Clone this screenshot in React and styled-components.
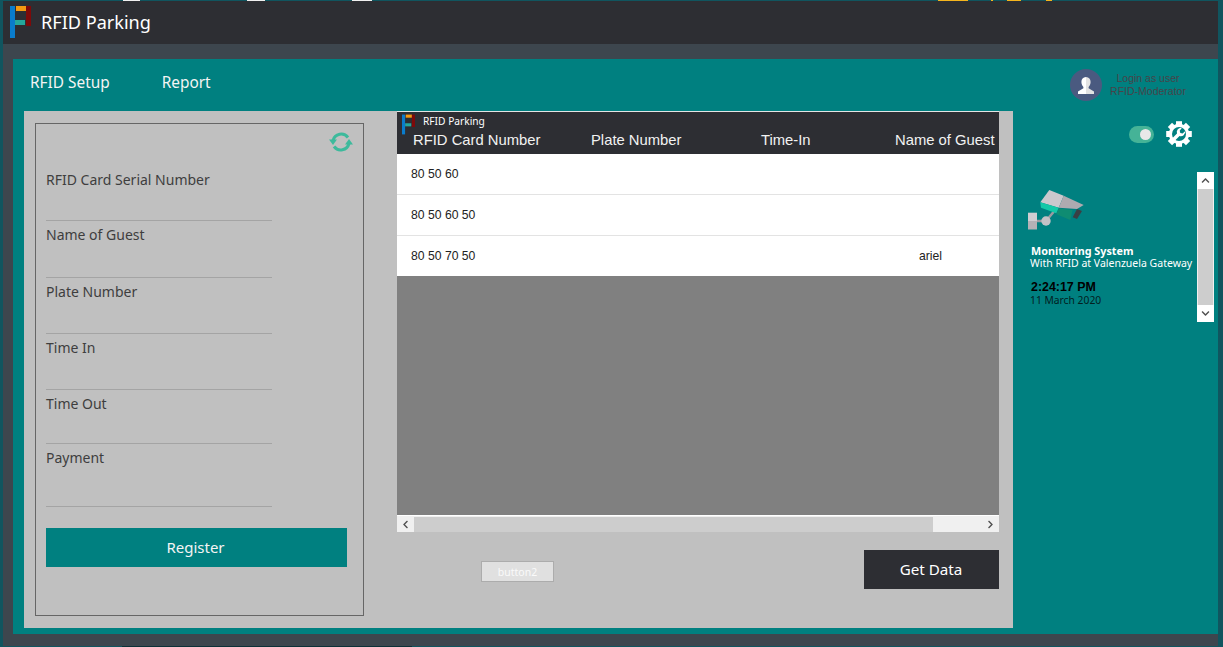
import React from "react";
import styled, { createGlobalStyle } from "styled-components";
import { FaChevronLeft, FaChevronRight, FaChevronUp, FaChevronDown } from "react-icons/fa";

const Global = createGlobalStyle`
  html, body { margin: 0; padding: 0; width: 1223px; height: 647px; overflow: hidden; background: #10555f; }
  * { box-sizing: border-box; }
`;
const ui = `"Noto Sans", "Open Sans", sans-serif`;
const arial = `"Liberation Sans", Arial, sans-serif`;

const Page = styled.div`
  width: 1223px; height: 647px; padding: 0 5px 0 3px;
  display: flex; flex-direction: column;
`;
const Sliver = styled.div`
  height: 1px; flex: none; display: flex; margin-left: -3px;
`;
const Bit = styled.span`
  height: 1px; flex: none; width: ${p => p.$w}px; margin-left: ${p => p.$ml}px; background: ${p => p.$c};
`;
const TitleBar = styled.header`
  height: 43px; background: #2d2e33; flex: none;
  display: flex; align-items: center; gap: 10px; padding: 0 0 2px 7px;
  color: #fff; font: 18.1px ${ui};
`;
const Frame = styled.div`
  flex: 1; background: #3d464e; padding: 15px 0 12px 10px; display: flex; min-height: 0;
`;
const Teal = styled.div`
  flex: 1; background: #008080; display: flex; flex-direction: column; min-width: 0;
`;
const TopRow = styled.div`
  height: 52px; flex: none; display: flex; align-items: center;
`;
const NavItem = styled.span`
  color: #f4f4f4; font: 15.4px ${ui}; margin: 0 0 6px ${p => p.$ml}px;
`;
const User = styled.div`
  margin-left: auto; margin-right: 32px; display: flex; align-items: center; gap: 8px;
`;
const UserText = styled.div`
  color: #474449; font: 10.5px/13.5px ${arial}; text-align: center; width: 76px; white-space: nowrap;
`;
const Body = styled.div`
  flex: 1; display: flex; min-height: 0; padding-left: 11px; padding-bottom: 6px;
`;
const Panel = styled.main`
  width: 989px; background: #c0c0c0; display: flex; padding: 0 14px 0 11px; gap: 33px;
`;
const FormBox = styled.section`
  width: 329px; height: 493px; margin-top: 12px; border: 1px solid #666; padding: 0 16px 0 10px;
  display: flex; flex-direction: column;
`;
const FormHead = styled.div`
  height: 41px; display: flex; justify-content: flex-end; align-items: flex-start; padding-top: 7px; margin-right: -6px; flex: none;
`;
const Field = styled.div`
  height: ${p => p.$h}px; width: 226px; border-bottom: 1px solid #a4a4a4; flex: none;
  color: #3e3e3e; font: 14px/20px ${ui};
  padding-top: ${p => p.$t}px;
`;
const Register = styled.button`
  width: 301px; height: 39px; margin-top: 21px; border: 0; background: #008080; color: #f4f4f4;
  font: 15px ${ui}; flex: none; padding: 0 2px 2px 0;
`;
const Right = styled.section`
  width: 602px; display: flex; flex-direction: column;
`;
const Table = styled.div`
  height: 421px; background: #808080; display: flex; flex-direction: column; overflow: hidden;
  border-top: 1px solid #e4e4e4;
`;
const TableHead = styled.div`
  height: 42px; background: #2d2e33; color: #f2f2f2; flex: none; padding: 2px 0 0 5px; overflow: hidden;
`;
const MiniTitle = styled.div`
  display: flex; gap: 8px; font: 10.2px/14px ${ui}; height: 16px; color: #fff;
`;
const Columns = styled.div`
  display: grid; grid-template-columns: 178px 170px 134px 140px; padding-left: 11px;
  font: 14.8px/20px ${arial}; white-space: nowrap;
`;
const Row = styled.div`
  height: 41px; background: #fff; border-bottom: 1px solid #e3e3e3; flex: none;
  display: grid; grid-template-columns: 508px 94px; padding-left: 14px; align-items: center;
  font: 12.2px ${arial}; color: #222;
`;
const LastRow = styled(Row)`height: 40px; border-bottom: 0;`;
const Empty = styled.div`flex: 1;`;
const HScroll = styled.div`
  height: 17px; background: #f0f0f0; display: flex; align-items: center; flex: none;
  border-top: 1px solid #fff;
`;
const ArrowBtn = styled.span`
  width: 17px; height: 16px; display: flex; align-items: center; justify-content: center;
  color: #505050; font-size: 9px; flex: none;
`;
const HThumb = styled.span`
  width: 519px; height: 15px; background: #cdcdcd; flex: none;
`;
const Spacer = styled.span`flex: 1;`;
const Actions = styled.div`
  flex: 1; display: flex; padding-left: 84px; padding-top: 18px; justify-content: space-between; align-items: flex-start;
`;
const SmallBtn = styled.button`
  width: 73px; height: 21px; margin-top: 11px; border: 1px solid #acacac; background: #e0e0e0; color: #fafafa;
  font: 10.5px ${ui}; padding: 0;
`;
const GetData = styled.button`
  width: 135px; height: 39px; border: 0; background: #2d2e33; color: #fff; font: 15.2px ${ui}; padding: 0 1px 2px 0;
`;
const Side = styled.aside`
  flex: 1; min-width: 0; display: flex; flex-direction: column; align-items: flex-end; padding-right: 4px;
`;
const SideTools = styled.div`
  height: 51px; display: flex; gap: 12px; padding-right: 22px; align-items: flex-start; flex: none; margin-top: 10px;
`;
const Toggle = styled.span`
  width: 25px; height: 17px; border-radius: 9px; background: #45b397; display: flex; align-items: center; justify-content: flex-end; padding-right: 3px; margin-top: 5px;
`;
const Knob = styled.span`
  width: 11px; height: 11px; border-radius: 50%; background: #e8e8e8;
`;
const ScrollArea = styled.div`
  width: 100%; height: 150px; display: flex; justify-content: space-between;
`;
const Info = styled.div`
  padding: 18px 0 0 15px; color: #fff; min-width: 0;
`;
const InfoTitle = styled.div`
  font: bold 10.8px/13px ${ui}; margin: 14px 0 0 3px; white-space: nowrap;
`;
const InfoSub = styled.div`
  font: 10.5px/13px ${ui}; margin-left: 2px; white-space: nowrap;
`;
const Clock = styled.div`
  font: bold 12.4px/13px ${arial}; color: #000; margin: 11px 0 0 3px;
`;
const DateText = styled.div`
  font: 10.3px/13px ${ui}; color: #02201f; margin-left: 2px;
`;
const VScroll = styled.div`
  width: 17px; height: 150px; background: #f0f0f0; display: flex; flex-direction: column; align-items: center; flex: none;
`;
const VThumb = styled.span`
  width: 15px; flex: 1; background: #cdcdcd;
`;
const VBtn = styled.span`
  height: 17px; width: 17px; display: flex; align-items: center; justify-content: center; color: #505050; font-size: 9px; flex: none; background: #fff;
`;
const LogoWrap = styled.span`
  display: block; flex: none;
`;

const Logo = ({ w, h }) => (
  <LogoWrap>
    <svg width={w} height={h} viewBox="0 0 21 32" style={{ display: "block" }}>
      <rect x="0" y="0" width="5" height="32" fill="#0a7ccc" />
      <rect x="6" y="0" width="10" height="5" fill="#f49a12" />
      <rect x="5" y="14" width="10" height="5" fill="#25a79c" />
      <rect x="16" y="0" width="5" height="20" fill="#7d0a0a" />
    </svg>
  </LogoWrap>
);
const Refresh = () => (
  <svg width="24" height="22" viewBox="0 0 24 22" style={{ display: "block" }}>
    <path d="M19 6.500A8.500 8.500 0 0 0 4 9.500" fill="none" stroke="#3dba9c" strokeWidth="3" />
    <path d="M5 15.500A8.500 8.500 0 0 0 20 12.500" fill="none" stroke="#3dba9c" strokeWidth="3" />
    <path d="M0 8.500h8L4 14z" fill="#3dba9c" />
    <path d="M16 13.500h8L20 8z" fill="#3dba9c" />
  </svg>
);
const Avatar = () => (
  <svg width="32" height="32" viewBox="0 0 32 32" style={{ flex: "none" }}>
    <circle cx="16" cy="16" r="16" fill="#4a5a80" />
    <path d="M16 8c-3 0-4.600 2.200-4.600 5 0 2.200 1 4 2 5v1.300L8 22.500V25h8z" fill="#fff" />
    <path d="M16 8c3 0 4.600 2.200 4.600 5 0 2.200-1 4-2 5v1.300l5.400 3.200V25h-8z" fill="#e3e3e3" />
  </svg>
);
const Gear = () => {
  const teeth = [0, 45, 90, 135, 180, 225, 270, 315];
  return (
    <svg width="26" height="26" viewBox="0 0 26 26" style={{ flex: "none" }}>
      {teeth.map(a => (
        <rect key={a} x="10" y="0.200" width="6" height="6" fill="#fff" transform={`rotate(${a} 13 13)`} />
      ))}
      <circle cx="13" cy="13" r="10.200" fill="#fff" />
      <circle cx="13" cy="13" r="7" fill="#008080" />
      <path d="M15.800 6.900a4.300 4.300 0 0 0-4.800 5.600l-4.700 4.700 2.500 2.500 4.700-4.700a4.300 4.300 0 0 0 5.600-4.800l-2.500 2.400-2.300-.6-.6-2.300z" fill="#fff" />
    </svg>
  );
};
const Camera = () => (
  <svg width="58" height="40" viewBox="0 0 58 40" style={{ display: "block" }}>
    <path d="M18 31L25.700 21.700" stroke="#9a9aa0" strokeWidth="2.500" />
    <path d="M9 31H18" stroke="#9a9aa0" strokeWidth="2.500" />
    <rect x="0" y="22.700" width="9" height="8.300" fill="#d0cdd2" />
    <rect x="0" y="31" width="9" height="8.500" fill="#b4b1b6" />
    <circle cx="18" cy="31" r="4.700" fill="#c4c1c6" />
    <path d="M21.300 0L12.300 12.300 30.700 17.700 35.700 5.700z" fill="#cbc8cd" />
    <path d="M35.700 5.700L55.700 15 49 19 30.700 17.700z" fill="#aeaab0" />
    <path d="M12.300 12.300L30.700 17.700 28.300 23.300 13 17.700z" fill="#14c8a8" />
    <path d="M30.700 18.500L44.500 20 42.300 30 28.500 24.300z" fill="#0f8c72" />
    <path d="M49 19L54 21 49 29 44.700 27.300z" fill="#3a3f44" />
  </svg>
);

const topBits = [
  [17, 123, "#f0f0f0"], [18, 107, "#f0f0f0"], [20, 87, "#f0f0f0"],
  [30, 566, "#f5b51e"], [2, 23, "#f5b51e"], [14, 14, "#f5b51e"], [6, 25, "#f5b51e"],
];
const rows = [
  ["80 50 60", ""],
  ["80 50 60 50", ""],
];

export default function App() {
  return (
    <Page>
      <Global />
      <Sliver>
        {topBits.map((b, i) => <Bit key={i} $w={b[0]} $ml={b[1]} $c={b[2]} />)}
      </Sliver>
      <TitleBar>
        <Logo w={21} h={32} />
        RFID Parking
      </TitleBar>
      <Frame>
        <Teal>
          <TopRow>
            <NavItem $ml={17}>RFID Setup</NavItem>
            <NavItem $ml={52}>Report</NavItem>
            <User>
              <Avatar />
              <UserText>Login as user<br />RFID-Moderator</UserText>
            </User>
          </TopRow>
          <Body>
            <Panel>
              <FormBox>
                <FormHead><Refresh /></FormHead>
                <Field $h={56} $t={5}>RFID Card Serial Number</Field>
                <Field $h={57} $t={4}>Name of Guest</Field>
                <Field $h={56} $t={4}>Plate Number</Field>
                <Field $h={56} $t={4}>Time In</Field>
                <Field $h={54} $t={4}>Time Out</Field>
                <Field $h={63} $t={4}>Payment</Field>
                <Register>Register</Register>
              </FormBox>
              <Right>
                <Table>
                  <TableHead>
                    <MiniTitle><Logo w={13} h={21} />RFID Parking</MiniTitle>
                    <Columns>
                      <span>RFID Card Number</span>
                      <span>Plate Number</span>
                      <span>Time-In</span>
                      <span>Name of Guest</span>
                    </Columns>
                  </TableHead>
                  {rows.map(r => (
                    <Row key={r[0]}><span>{r[0]}</span><span>{r[1]}</span></Row>
                  ))}
                  <LastRow><span>80 50 70 50</span><span>ariel</span></LastRow>
                  <Empty />
                  <HScroll>
                    <ArrowBtn><FaChevronLeft /></ArrowBtn>
                    <HThumb />
                    <Spacer />
                    <ArrowBtn><FaChevronRight /></ArrowBtn>
                  </HScroll>
                </Table>
                <Actions>
                  <SmallBtn>button2</SmallBtn>
                  <GetData>Get Data</GetData>
                </Actions>
              </Right>
            </Panel>
            <Side>
              <SideTools>
                <Toggle><Knob /></Toggle>
                <Gear />
              </SideTools>
              <ScrollArea>
                <Info>
                  <Camera />
                  <InfoTitle>Monitoring System</InfoTitle>
                  <InfoSub>With RFID at Valenzuela Gateway</InfoSub>
                  <Clock>2:24:17 PM</Clock>
                  <DateText>11 March 2020</DateText>
                </Info>
                <VScroll>
                  <VBtn><FaChevronUp /></VBtn>
                  <VThumb />
                  <VBtn><FaChevronDown /></VBtn>
                </VScroll>
              </ScrollArea>
            </Side>
          </Body>
        </Teal>
      </Frame>
      <Sliver>
        <Bit $w={290} $ml={122} $c="#0b3138" />
      </Sliver>
    </Page>
  );
}
